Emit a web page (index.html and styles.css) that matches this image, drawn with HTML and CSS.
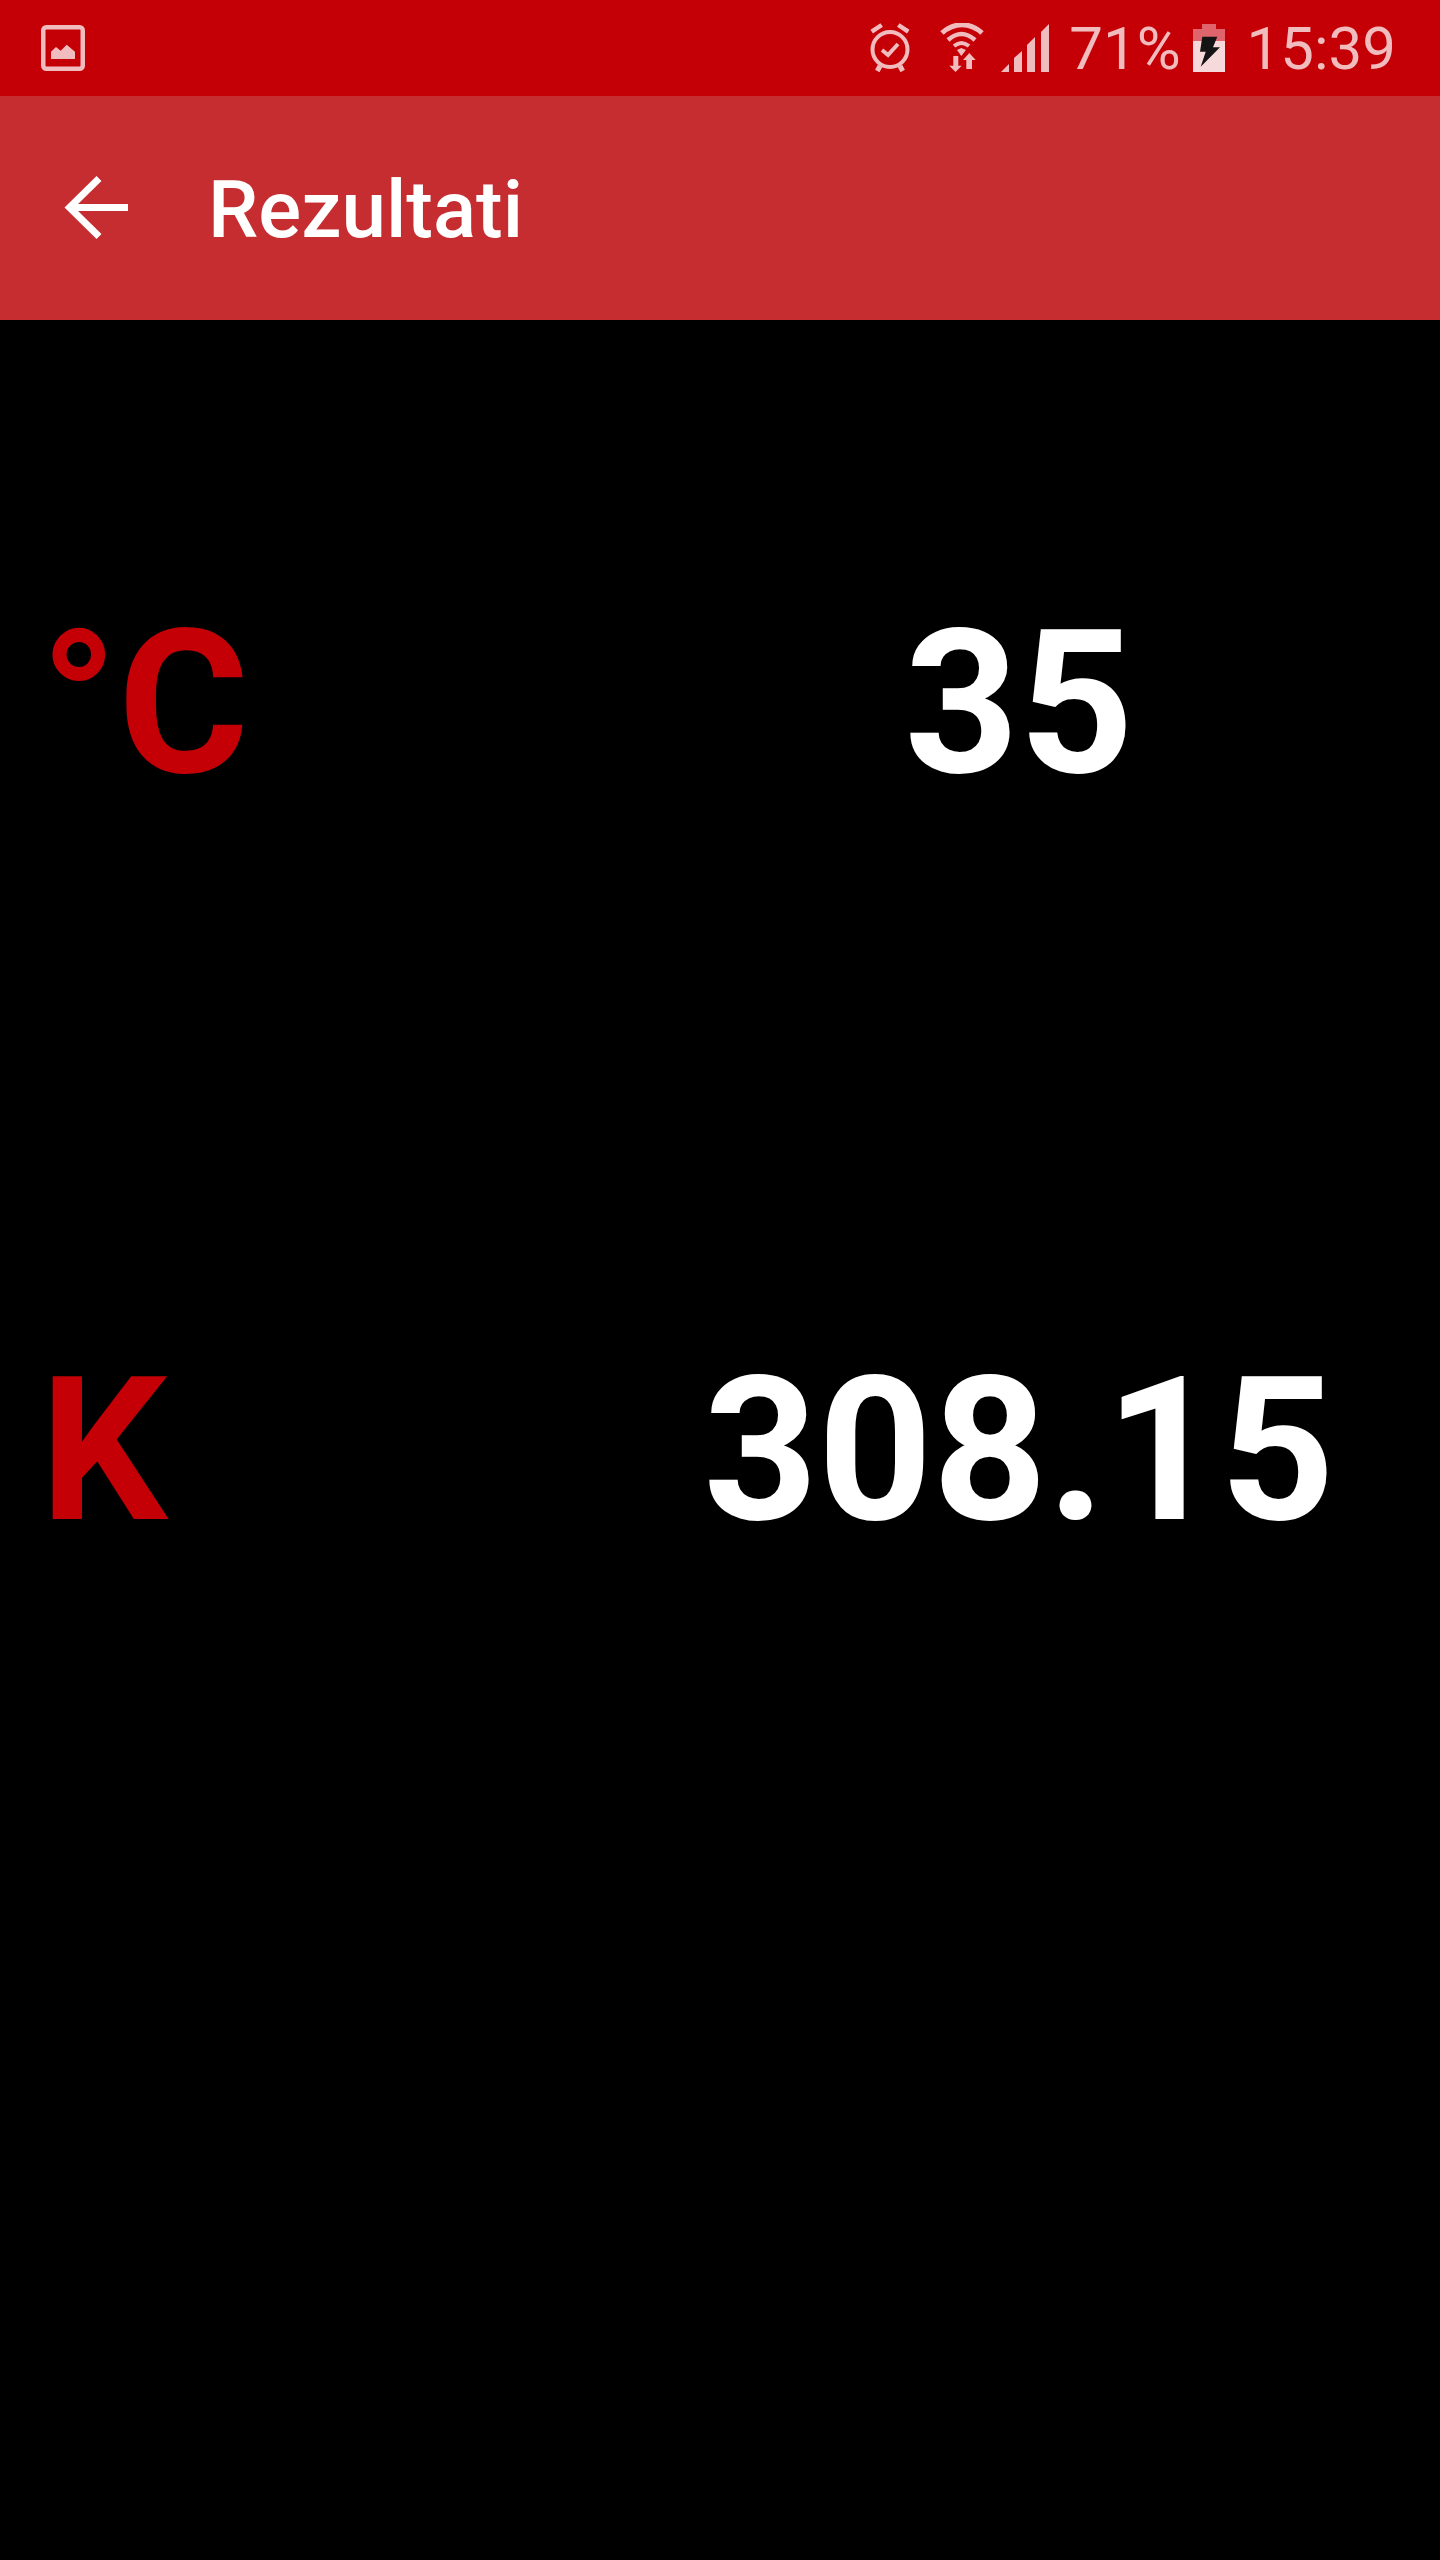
FILE: index.html
```html
<!DOCTYPE html>
<html lang="en">
<head>
    <meta charset="UTF-8">
    <meta name="viewport" content="width=device-width, initial-scale=1.0">
    <title>Rezultati</title>
    <link rel="stylesheet" href="styles.css">
</head>
<body>
    <div class="status-bar">
        <svg class="icon-gallery" width="44" height="46" viewBox="0 0 44 46">
            <rect x="2.25" y="2.25" width="39.5" height="41.5" rx="3" fill="none" stroke="#f1bcbe" stroke-width="4.5"/>
            <path d="M10 34V26.7L15 22L19.7 25.7L25.7 19.7L34 26.7V34Z" fill="#f1bcbe"/>
        </svg>
        <div class="status-right">
            <svg class="icon-alarm" width="42" height="50" viewBox="0 0 42 50">
                <circle cx="21" cy="26.5" r="17.5" fill="none" stroke="#f1bcbe" stroke-width="4"/>
                <path d="M2.7 8.7L12.7 2M39.3 8.7L29.3 2" stroke="#f1bcbe" stroke-width="4.5" fill="none"/>
                <path d="M8.3 48L11 43M33.7 48L31 43" stroke="#f1bcbe" stroke-width="5" fill="none"/>
                <path d="M13 27L19 32L29 21" stroke="#f1bcbe" stroke-width="4" fill="none"/>
            </svg>
            <svg class="icon-wifi" width="44" height="50" viewBox="0 0 44 50">
                <path d="M2 10C14 -1 30 -1 42 10" stroke="#f1bcbe" stroke-width="5" fill="none"/>
                <path d="M8 17C17 9 26 9 35 17" stroke="#f1bcbe" stroke-width="4.5" fill="none"/>
                <path d="M14 23C19 19 24 19 29 23" stroke="#f1bcbe" stroke-width="4" fill="none"/>
                <path d="M17 27L21.3 25L26 27L21.3 33Z" fill="#f1bcbe"/>
                <path d="M13.3 33H18.3V42.7H21.7L15.5 49L9.3 42.7H13.3Z" fill="#f1bcbe"/>
                <path d="M26.3 46V37H23L29.3 30L35.7 37H32V46Z" fill="#f1bcbe"/>
            </svg>
            <svg class="icon-signal" width="48" height="48" viewBox="0 0 48 48">
                <path d="M0 48L8 40V48Z" fill="#f1bcbe"/>
                <path d="M13 48V34L21 27V48Z" fill="#f1bcbe"/>
                <path d="M26 48V21L34 13V48Z" fill="#f1bcbe"/>
                <path d="M40 48V8L48 0V48Z" fill="#f1bcbe"/>
            </svg>
            <span class="status-text">71%</span>
            <svg class="icon-battery" width="32" height="48" viewBox="0 0 32 48">
                <path d="M9 0H23V5H32V17H0V5H9Z" fill="#e0646c"/>
                <path d="M0 17H32V48H0Z" fill="#f6d9db"/>
                <path d="M9.3 12.7H24.3L20 23.3H27L7.7 42.7L12.7 27.7H7Z" fill="#141414"/>
            </svg>
            <span class="status-text">15:39</span>
        </div>
    </div>

    <header class="app-bar">
        <svg class="icon-back" width="64" height="64" viewBox="0 0 64 64">
            <path d="M64 31.5H5M35 2.5L5.5 31.5L35 60.5" stroke="#fff" stroke-width="7" fill="none"/>
        </svg>
        <h1 class="app-title">Rezultati</h1>
    </header>

    <main class="results">
        <div class="result-row">
            <span class="unit">°C</span>
            <span class="value">35</span>
        </div>
        <div class="result-row">
            <span class="unit">K</span>
            <span class="value">308.15</span>
        </div>
    </main>
</body>
</html>
```

FILE: styles.css
```css
* {
    box-sizing: border-box;
}
html, body {
    margin: 0;
    height: 100%;
}
body {
    background-color: #000;
    font-family: Roboto, sans-serif;
    overflow: hidden;
}
.status-bar {
    height: 96px;
    background-color: #c40006;
    display: flex;
    align-items: center;
    justify-content: space-between;
    padding: 0 44px 0 41px;
}
.status-right {
    display: flex;
    align-items: center;
}
.icon-alarm {
    margin-right: 29px;
}
.icon-wifi {
    margin-right: 17px;
}
.icon-signal {
    margin-right: 20px;
}
.icon-battery {
    margin: 0 22px 0 12px;
}
.status-text {
    font-size: 60px;
    line-height: 96px;
    padding-top: 2px;
    color: #f1bcbe;
}
.app-bar {
    height: 224px;
    background-color: #c62d30;
    display: flex;
    align-items: center;
    padding-left: 64px;
}
.icon-back {
    margin-right: 80px;
}
.app-title {
    margin: 4px 0 0;
    font-size: 80px;
    font-weight: 500;
    color: #fff;
}
.results {
    padding: 267px 48px 0 40px;
    display: flex;
    flex-direction: column;
    gap: 513px;
}
.result-row {
    display: grid;
    grid-template-columns: 620px 718px;
    font-size: 200px;
    line-height: 234px;
    font-weight: 700;
}
.unit {
    color: #c40006;
}
.value {
    color: #fff;
    text-align: center;
}
```
